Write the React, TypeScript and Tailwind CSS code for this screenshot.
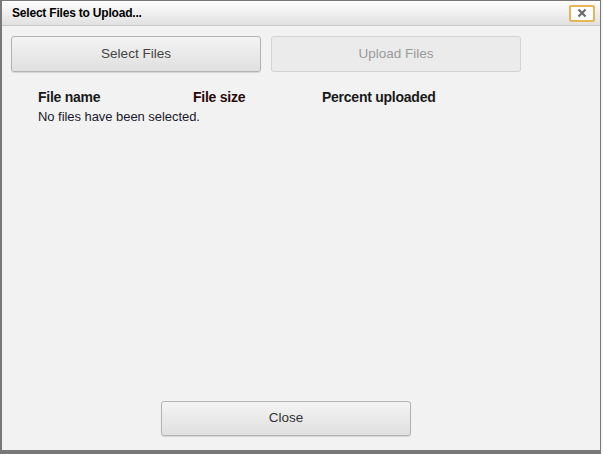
import React from 'react'

const font = { fontFamily: '"Liberation Sans", Arial, sans-serif' }

const App: React.FC = () => {
  return (
    <div className="flex h-[454px] w-[603px] bg-[#f7f7f7]" style={font}>
      <div className="flex h-[454px] w-[601px] flex-col border-t border-r border-l-2 border-b-4 border-[#787878] bg-[#f2f2f2]">
        <div className="flex h-[25px] items-center justify-between border-b border-[#c9c9c9] bg-gradient-to-b from-[#fdfdfd] to-[#e1e1e1] pl-[10px] pr-[5px]">
          <span className="text-[12px] font-bold leading-none tracking-[-0.2px] text-black">
            Select Files to Upload...
          </span>
          <button className="flex h-[17px] w-[26px] items-center justify-center rounded-[2px] border-2 border-[#e6b656] bg-white">
            <svg width="10" height="10" viewBox="0 0 10 10">
              <path d="M1.5 1.5 L8.5 8.5 M8.5 1.5 L1.5 8.5" stroke="#6b6b6b" strokeWidth="2.2" />
            </svg>
          </button>
        </div>

        <div className="flex flex-1 flex-col">
          <div className="flex gap-[10px] pt-[10px] pl-[9px]">
            <button className="h-[36px] w-[250px] rounded-[3px] border border-[#b3b3b3] bg-gradient-to-b from-[#f3f3f3] to-[#e0e0e0] text-[13.5px] text-[#444] shadow-[0_1px_1px_rgba(0,0,0,0.12)]">
              Select Files
            </button>
            <button className="h-[36px] w-[250px] rounded-[3px] border border-[#d3d3d3] bg-[#ebebeb] text-[13.5px] text-[#9a9a9a]">
              Upload Files
            </button>
          </div>

          <div className="pt-[17px] pl-[36px]">
            <div className="flex text-[14px] font-bold leading-[16px] tracking-[-0.25px] text-[#1a1a1a]">
              <span className="w-[155px]">File name</span>
              <span className="w-[129px] text-[#2a0a0a]">File size</span>
              <span>Percent uploaded</span>
            </div>
            <div className="mt-[4px] text-[13px] leading-[15px] tracking-[-0.05px] text-[#1a1a2a]">
              No files have been selected.
            </div>
          </div>

          <div className="mt-auto pb-[14px] pl-[159px]">
            <button className="h-[35px] w-[250px] rounded-[3px] border border-[#b3b3b3] bg-gradient-to-b from-[#f3f3f3] to-[#e0e0e0] text-[13.5px] text-[#333] shadow-[0_1px_1px_rgba(0,0,0,0.12)]">
              Close
            </button>
          </div>
        </div>
      </div>
    </div>
  )
}

export default App
